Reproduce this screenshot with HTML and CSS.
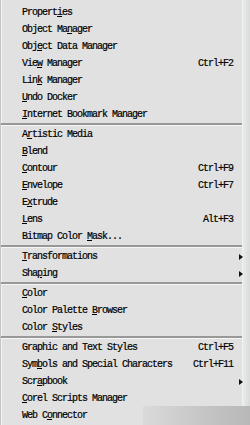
FILE: index.html
```html
<!DOCTYPE html>
<html>
<head>
<meta charset="utf-8">
<link rel="stylesheet" href="styles.css">
</head>
<body>
<div class="menu">
  <div class="item"><span class="label">Propert<u>i</u>es</span></div>
  <div class="item"><span class="label">Object Ma<u>n</u>ager</span></div>
  <div class="item"><span class="label">Obj<u>e</u>ct Data Manager</span></div>
  <div class="item"><span class="label">Vie<u>w</u> Manager</span><span class="key">Ctrl+F2</span></div>
  <div class="item"><span class="label">Lin<u>k</u> Manager</span></div>
  <div class="item"><span class="label"><u>U</u>ndo Docker</span></div>
  <div class="item"><span class="label"><u>I</u>nternet Bookmark Manager</span></div>
  <div class="sep"></div>
  <div class="item"><span class="label">A<u>r</u>tistic Media</span></div>
  <div class="item"><span class="label"><u>B</u>lend</span></div>
  <div class="item"><span class="label"><u>C</u>ontour</span><span class="key">Ctrl+F9</span></div>
  <div class="item"><span class="label"><u>E</u>nvelope</span><span class="key">Ctrl+F7</span></div>
  <div class="item"><span class="label">E<u>x</u>trude</span></div>
  <div class="item"><span class="label"><u>L</u>ens</span><span class="key">Alt+F3</span></div>
  <div class="item"><span class="label">Bitmap Color <u>M</u>ask...</span></div>
  <div class="sep"></div>
  <div class="item"><span class="label"><u>T</u>ransformations</span><span class="arrow"></span></div>
  <div class="item"><span class="label">Sha<u>p</u>ing</span><span class="arrow"></span></div>
  <div class="sep"></div>
  <div class="item"><span class="label"><u>C</u>olor</span></div>
  <div class="item"><span class="label">Color Palette <u>B</u>rowser</span></div>
  <div class="item"><span class="label">Color <u>S</u>tyles</span></div>
  <div class="sep"></div>
  <div class="item"><span class="label">Graphic and Text Styles</span><span class="key">Ctrl+F5</span></div>
  <div class="item"><span class="label">Sym<u>b</u>ols and Special Characters</span><span class="key">Ctrl+F11</span></div>
  <div class="item"><span class="label">Scr<u>a</u>pbook</span><span class="arrow"></span></div>
  <div class="item"><span class="label"><u>C</u>orel Scripts Manager</span></div>
  <div class="item"><span class="label">Web C<u>o</u>nnector</span></div>
</div>
<div class="edge"></div>
<div class="corner"></div>
</body>
</html>
```
FILE: styles.css
```css
html, body {
  margin: 0;
  padding: 0;
  width: 250px;
  height: 425px;
  overflow: hidden;
  background: #e8e8e8;
}
body {
  position: relative;
  font-family: "Liberation Mono", "DejaVu Sans Mono", monospace;
  font-size: 10px;
  color: #000;
}
.menu {
  width: 243px;
  height: 425px;
  box-sizing: border-box;
  padding-top: 4px;
  background: #e1e1e1;
  border-left: 1px solid #c4c4c4;
  box-shadow: inset 1px 0 0 #f4f4f4;
  border-right: 1px solid #f0f0f0;
  position: relative;
  z-index: 1;
}
.item {
  display: grid;
  grid-template-columns: 1fr auto 9px;
  align-items: center;
  height: 17px;
  line-height: 17px;
  letter-spacing: -1px;
  padding-left: 21px;
  white-space: nowrap;
  -webkit-text-stroke: 0.2px #000;
}
.label u {
  text-underline-offset: 1px;
}
.key {
  grid-column: 2;
}
.arrow {
  grid-column: 3;
  justify-self: end;
  width: 0;
  height: 0;
  border-top: 3px solid transparent;
  border-bottom: 3px solid transparent;
  border-left: 4px solid #111;
  margin-right: -1px;
}
.sep {
  height: 0;
  border-top: 2px solid #989898;
  border-bottom: 1px solid #f6f6f6;
}
.edge {
  position: absolute;
  right: 0;
  top: 0;
  width: 7px;
  height: 425px;
  background: linear-gradient(to right, #e9ecec, #d8dada);
}
.corner {
  position: absolute;
  left: 143px;
  top: 406px;
  width: 107px;
  height: 19px;
  z-index: 2;
  background: linear-gradient(to right, #dadada, #c4c4c4 60%, #b8b8b8);
}
```
